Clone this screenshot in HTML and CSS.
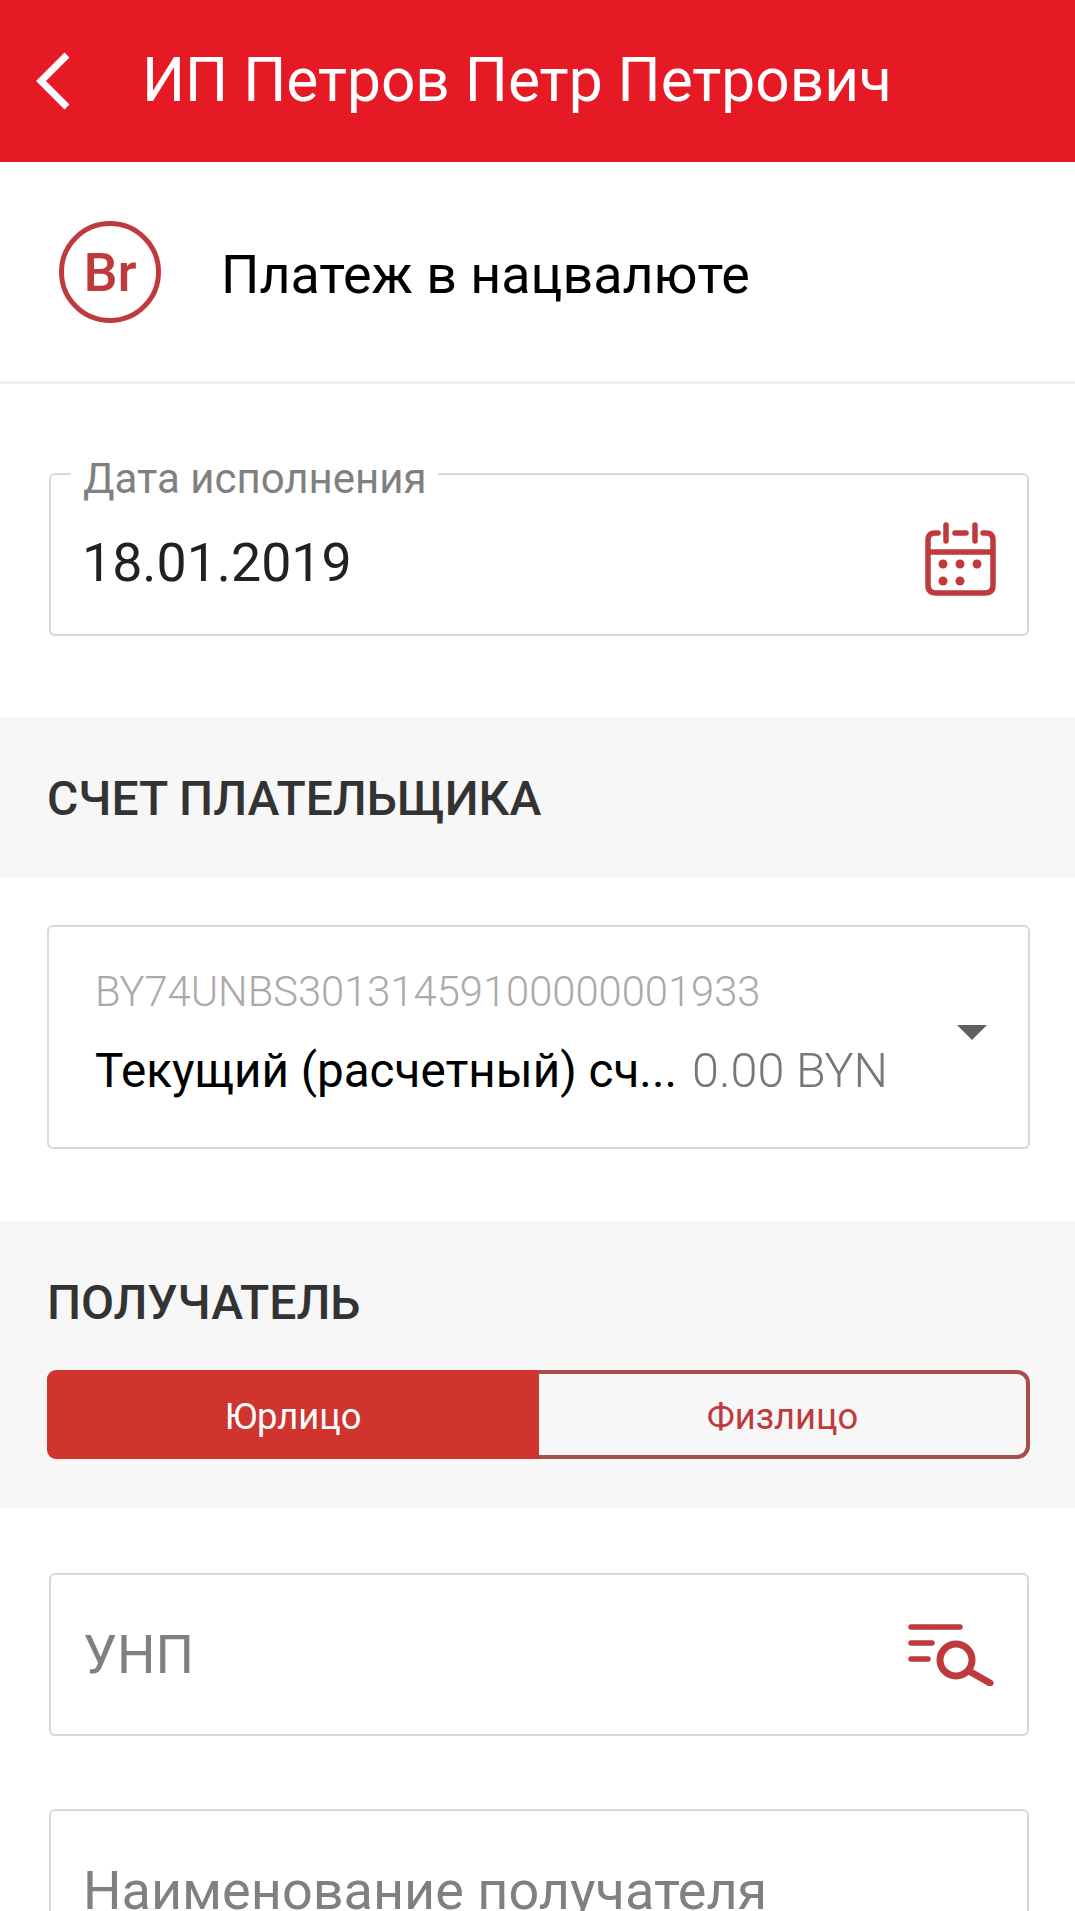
FILE: index.html
```html
<!DOCTYPE html>
<html lang="ru">
<head>
    <meta charset="UTF-8">
    <meta name="viewport" content="width=device-width, initial-scale=1.0">
    <title>Платеж в нацвалюте</title>
    <link rel="stylesheet" href="styles.css">
</head>
<body>
    <header class="topbar">
        <svg class="back" width="36" height="60" viewBox="0 0 36 60">
            <path d="M32 4 L6 30 L32 56" fill="none" stroke="#fff" stroke-width="7"/>
        </svg>
        <h1>ИП Петров Петр Петрович</h1>
    </header>

    <div class="doc-type">
        <div class="currency">Br</div>
        <div class="doc-name">Платеж в нацвалюте</div>
    </div>

    <div class="block block-date">
        <div class="field field-date">
            <span class="field-label">Дата исполнения</span>
            <span class="field-value">18.01.2019</span>
            <svg class="field-icon" width="72" height="74" viewBox="0 0 72 74">
                <g fill="none" stroke="#bf3a3d" stroke-width="5.500" stroke-linecap="round">
                    <path d="M13 11 H10 Q3 11 3 18 V63 Q3 71 11 71 H60 Q68 71 68 63 V18 Q68 11 61 11 H58"/>
                    <path d="M3 30 H68" stroke-linecap="butt"/>
                    <path d="M21 3 V19 M50 3 V19 M30 11 H41"/>
                </g>
                <g fill="#bf3a3d">
                    <circle cx="18" cy="42" r="4.500"/>
                    <circle cx="35" cy="42" r="4.500"/>
                    <circle cx="52" cy="42" r="4.500"/>
                    <circle cx="18" cy="59" r="4.500"/>
                    <circle cx="35" cy="59" r="4.500"/>
                </g>
            </svg>
        </div>
    </div>

    <div class="section-title title-payer">СЧЕТ ПЛАТЕЛЬЩИКА</div>

    <div class="block block-account">
        <div class="account">
            <div class="account-info">
                <div class="account-number">BY74UNBS30131459100000001933</div>
                <div class="account-line">
                    <span class="account-name">Текущий (расчетный) сч...</span>
                    <span class="account-sum">0.00 BYN</span>
                </div>
            </div>
            <div class="arrow"></div>
        </div>
    </div>

    <div class="recipient">
        <div class="section-name">ПОЛУЧАТЕЛЬ</div>
        <div class="switch">
            <div class="switch-on">Юрлицо</div>
            <div class="switch-off">Физлицо</div>
        </div>
    </div>

    <div class="block block-fields">
        <div class="field">
            <span class="placeholder">УНП</span>
            <svg class="search-icon" width="86" height="62" viewBox="0 0 86 62">
                <g fill="none" stroke="#bf3a3d" stroke-linecap="round">
                    <path d="M3 3 H52 M3 19 H24 M3 35 H20" stroke-width="5.500"/>
                    <circle cx="48" cy="36" r="16" stroke-width="7"/>
                    <path d="M61 47 L82 59" stroke-width="7"/>
                </g>
            </svg>
        </div>
        <div class="field">
            <span class="placeholder">Наименование получателя</span>
        </div>
    </div>
</body>
</html>
```

FILE: styles.css
```css
html, body {
    margin: 0;
    height: 1911px;
    overflow: hidden;
}
body {
    background: #fff;
    font-family: Roboto, "Noto Sans", sans-serif;
    color: #000;
}
.topbar {
    height: 162px;
    background: #e61a25;
    display: flex;
    align-items: center;
    padding-left: 35px;
    box-sizing: border-box;
}
.topbar h1 {
    margin: -2px 0 0 71px;
    color: #fff;
    font-size: 60.400px;
    font-weight: 400;
    white-space: nowrap;
}
.doc-type {
    height: 222px;
    box-sizing: border-box;
    border-bottom: 3px solid #eeeff0;
    display: flex;
    align-items: center;
    padding-left: 59px;
}
.currency {
    width: 102px;
    height: 102px;
    box-sizing: border-box;
    border: 5px solid #bf3a3d;
    border-radius: 50%;
    color: #bf3a3d;
    font-size: 54px;
    font-weight: 500;
    display: flex;
    align-items: center;
    justify-content: center;
    margin-top: 1px;
}
.doc-name {
    margin: 5px 0 0 60px;
    font-size: 53.800px;
}
.block {
    padding: 0 46px 0 49px;
}
.block-date {
    height: 333px;
    padding-top: 89px;
    box-sizing: border-box;
}
.field {
    height: 163px;
    box-sizing: border-box;
    border: 2px solid #d8d8d8;
    border-radius: 6px;
    padding: 0 30px 0 32px;
    display: flex;
    align-items: center;
    justify-content: space-between;
    position: relative;
}
.field-label {
    position: absolute;
    top: -15px;
    left: 20px;
    padding: 0 11px 0 12px;
    background: #fff;
    color: #808080;
    font-size: 42px;
    line-height: 38px;
}
.field-value {
    font-size: 53.700px;
    color: #212121;
    margin: 16px 0 0 -1px;
}
.field-icon {
    margin-top: 8px;
}
.search-icon {
    margin-right: 3px;
}
.section-title {
    height: 160px;
    background: #f7f7f7;
    padding: 2px 0 0 47px;
    box-sizing: border-box;
    display: flex;
    align-items: center;
    font-size: 48px;
    font-weight: 500;
    color: #333;
}
.block-account {
    height: 344px;
    padding: 48px 45px 0 47px;
    box-sizing: border-box;
}
.account {
    height: 224px;
    box-sizing: border-box;
    border: 2px solid #d8d8d8;
    border-radius: 6px;
    padding: 0 41px 0 46px;
    display: flex;
    align-items: center;
    justify-content: space-between;
}
.account-number {
    color: #aaa;
    font-size: 41.700px;
    font-weight: 300;
    line-height: 49px;
    margin-top: -8px;
}
.account-line {
    margin-top: 27px;
    display: flex;
    align-items: baseline;
    white-space: nowrap;
    line-height: 56px;
}
.account-name {
    font-size: 47.600px;
}
.account-sum {
    margin-left: 15px;
    font-size: 48.500px;
    font-weight: 300;
    color: #777;
}
.arrow {
    width: 0;
    height: 0;
    margin-top: -9px;
    border-left: 15px solid transparent;
    border-right: 15px solid transparent;
    border-top: 15px solid #5f5f5f;
}
.recipient {
    height: 287px;
    box-sizing: border-box;
    background: #f7f7f7;
    padding: 56px 45px 0 47px;
}
.section-name {
    font-size: 48px;
    font-weight: 500;
    color: #333;
    line-height: 52px;
}
.switch {
    margin-top: 41px;
    height: 89px;
    display: flex;
    font-size: 36.300px;
}
.switch-on, .switch-off {
    box-sizing: border-box;
    display: flex;
    align-items: center;
    justify-content: center;
    padding-top: 3px;
}
.switch-on {
    width: 492px;
    background: #d0342f;
    color: #fff;
    border-radius: 9px 0 0 9px;
}
.switch-off {
    flex: 1;
    color: #bf3a3d;
    border: 4px solid #a84c4c;
    border-left: none;
    border-radius: 0 13px 13px 0;
}
.block-fields {
    padding-top: 65px;
    display: flex;
    flex-direction: column;
    gap: 73px;
}
.placeholder {
    font-size: 54px;
    color: #808080;
}
```
